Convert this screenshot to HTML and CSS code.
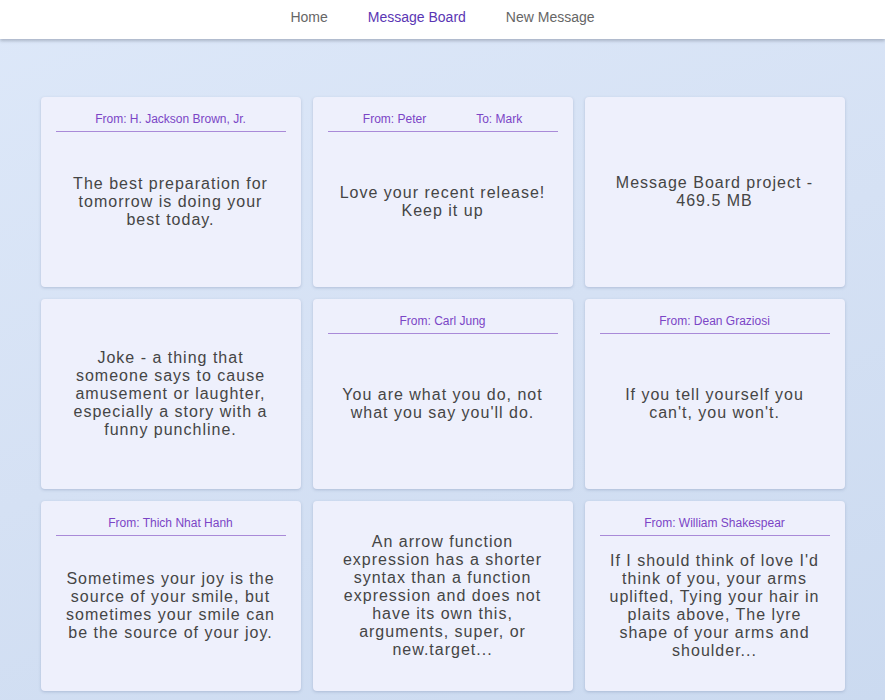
FILE: index.html
```html
<!DOCTYPE html>
<html>
<head>
<meta charset="utf-8">
<link rel="stylesheet" href="styles.css">
</head>
<body>
<nav class="nav">
  <a class="nav-link">Home</a>
  <a class="nav-link active">Message Board</a>
  <a class="nav-link">New Message</a>
</nav>
<main class="board">
  <div class="card">
    <div class="card-head"><span>From: H. Jackson Brown, Jr.</span></div>
    <div class="card-body"><p>The best preparation for tomorrow is doing your best today.</p></div>
  </div>
  <div class="card">
    <div class="card-head"><span>From: Peter</span><span>To: Mark</span></div>
    <div class="card-body"><p>Love your recent release! Keep it up</p></div>
  </div>
  <div class="card">
    <div class="card-body"><p>Message Board project - 469.5 MB</p></div>
  </div>
  <div class="card">
    <div class="card-body"><p>Joke - a thing that someone says to cause amusement or laughter, especially a story with a funny punchline.</p></div>
  </div>
  <div class="card">
    <div class="card-head"><span>From: Carl Jung</span></div>
    <div class="card-body"><p>You are what you do, not what you say you'll do.</p></div>
  </div>
  <div class="card">
    <div class="card-head"><span>From: Dean Graziosi</span></div>
    <div class="card-body"><p>If you tell yourself you can't, you won't.</p></div>
  </div>
  <div class="card">
    <div class="card-head"><span>From: Thich Nhat Hanh</span></div>
    <div class="card-body"><p>Sometimes your joy is the source of your smile, but sometimes your smile can be the source of your joy.</p></div>
  </div>
  <div class="card">
    <div class="card-body"><p>An arrow function expression has a shorter syntax than a function expression and does not have its own this, arguments, super, or new.target...</p></div>
  </div>
  <div class="card">
    <div class="card-head"><span>From: William Shakespear</span></div>
    <div class="card-body"><p>If I should think of love I'd think of you, your arms uplifted, Tying your hair in plaits above, The lyre shape of your arms and shoulder...</p></div>
  </div>
</main>
</body>
</html>
```

FILE: styles.css
```css
html, body {
  margin: 0;
  padding: 0;
}
body {
  font-family: "Liberation Sans", Arial, sans-serif;
  min-height: 700px;
  background: linear-gradient(160deg, #dde8f9 0%, #d5e1f4 50%, #cbdaf0 100%);
}
.nav {
  height: 34px;
  padding-bottom: 5px;
  background: #ffffff;
  display: flex;
  justify-content: center;
  align-items: center;
  box-shadow: 0 2px 3px rgba(80, 90, 110, 0.35);
  position: relative;
}
.nav-link {
  font-size: 14px;
  color: #666666;
  padding: 0 20px;
  text-decoration: none;
}
.nav-link.active {
  color: #5a36b4;
}
.board {
  width: 804px;
  margin: 0 auto;
  padding-top: 58px;
  display: grid;
  grid-template-columns: repeat(3, 260px);
  grid-auto-rows: 190px;
  gap: 12px;
}
.card {
  background: #eef0fc;
  border-radius: 4px;
  box-shadow: 0 1px 3px rgba(90, 110, 150, 0.3);
  padding: 15px;
  box-sizing: border-box;
  display: flex;
  flex-direction: column;
}
.card-head {
  display: flex;
  justify-content: center;
  gap: 50px;
  font-size: 12px;
  line-height: 14px;
  color: #7b45c6;
  padding-bottom: 5px;
  border-bottom: 1px solid #a98ad8;
}
.card-body {
  flex: 1;
  display: flex;
  align-items: center;
  justify-content: center;
  padding: 0 8px;
}
.card-body p {
  margin: 0;
  text-align: center;
  font-size: 16px;
  line-height: 18px;
  letter-spacing: 1px;
  color: #454545;
}
```
